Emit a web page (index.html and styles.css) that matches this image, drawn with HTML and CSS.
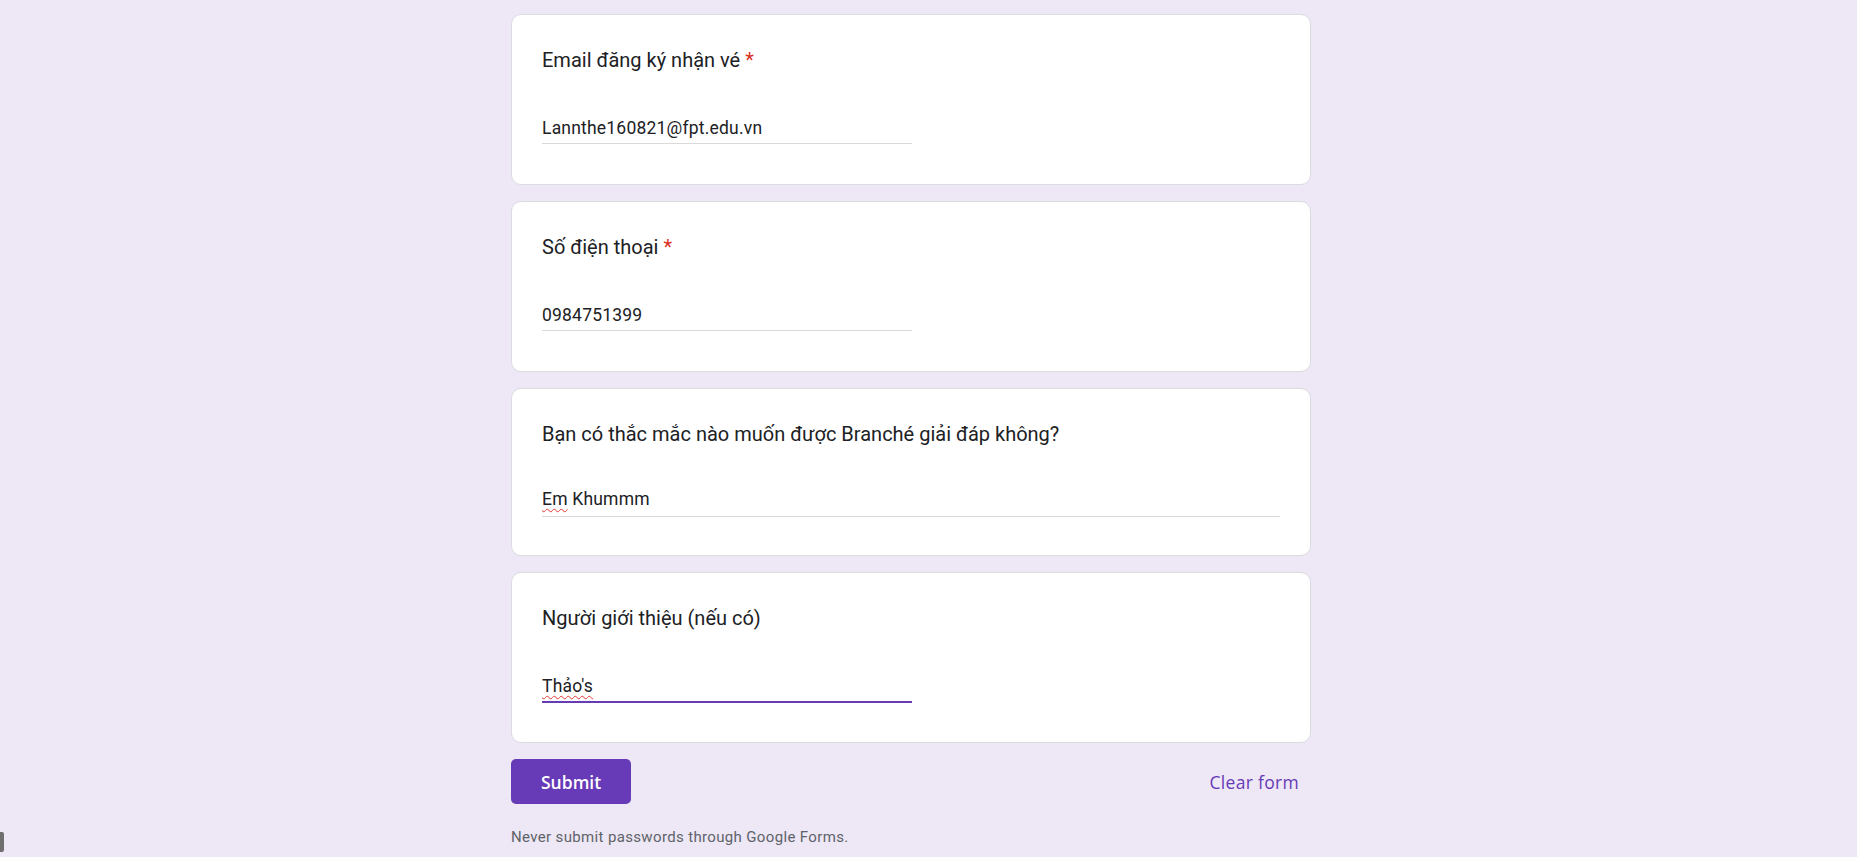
FILE: index.html
```html
<!DOCTYPE html>
<html lang="vi">
<head>
<meta charset="utf-8">
<title>Form</title>
<link rel="stylesheet" href="styles.css">
</head>
<body>
<main class="form">
  <section class="card">
    <div class="q-title">Email đăng ký nhận vé<span class="req">*</span></div>
    <div class="answer short"><span class="answer-text">Lannthe160821@fpt.edu.vn</span></div>
  </section>
  <section class="card">
    <div class="q-title">Số điện thoại<span class="req">*</span></div>
    <div class="answer short"><span class="answer-text">0984751399</span></div>
  </section>
  <section class="card">
    <div class="q-title">Bạn có thắc mắc nào muốn được Branché giải đáp không?</div>
    <div class="answer long"><span class="answer-text"><span class="misspelled">Em</span> Khummm</span></div>
  </section>
  <section class="card">
    <div class="q-title">Người giới thiệu (nếu có)</div>
    <div class="answer short focused"><span class="answer-text"><span class="misspelled">Thảo's</span></span></div>
  </section>
  <div class="actions">
    <button class="btn-submit" type="button">Submit</button>
    <button class="btn-clear" type="button">Clear form</button>
  </div>
  <p class="notice">Never submit passwords through Google Forms.</p>
</main>
<div class="edge-tab"></div>
</body>
</html>
```
FILE: styles.css
```css
html, body {
  margin: 0;
  padding: 0;
  height: 100%;
  overflow: hidden;
}
body {
  background: #ede7f6;
  font-family: Roboto, "Noto Sans", Arial, sans-serif;
  color: #202124;
}
.form {
  width: 800px;
  margin-left: 511px;
  padding-top: 14px;
  display: flex;
  flex-direction: column;
  gap: 16px;
}
.card {
  background: #fff;
  border: 1px solid #dadce0;
  border-radius: 10px;
  padding: 30px;
  display: flex;
  flex-direction: column;
}
.q-title {
  font-size: 20px;
  line-height: 30px;
  font-weight: 400;
  color: #202124;
}
.req {
  color: #d93025;
  padding-left: 5px;
}
.answer {
  margin-top: 42px;
  margin-bottom: 10px;
  padding-bottom: 4px;
  border-bottom: 1px solid #dadada;
  font-size: 17.5px;
  line-height: 22px;
  letter-spacing: 0.2px;
  color: #202124;
  position: relative;
}
.answer.short {
  width: 370px;
}
.answer.long {
  margin-top: 39px;
  padding-bottom: 6px;
  margin-bottom: 8px;
}
.answer.focused::after {
  content: "";
  position: absolute;
  left: 0;
  right: 0;
  bottom: -2px;
  height: 2px;
  background: #673ab7;
}
.misspelled {
  text-decoration: underline wavy #e53935;
  text-decoration-thickness: 1px;
  text-underline-offset: 3px;
  text-decoration-skip-ink: none;
}
.actions {
  display: flex;
  justify-content: space-between;
  align-items: center;
}
.btn-submit {
  height: 45px;
  padding: 0 30px;
  border: none;
  border-radius: 5px;
  background: #673ab7;
  color: #fff;
  font-family: "Open Sans", Roboto, sans-serif;
  font-size: 17.5px;
  font-weight: 600;
  cursor: pointer;
}
.btn-clear {
  height: 45px;
  padding: 0 12px 0 10px;
  border: none;
  background: transparent;
  color: #673ab7;
  font-family: "Open Sans", Roboto, sans-serif;
  font-size: 17.5px;
  font-weight: 500;
  letter-spacing: 0.3px;
  cursor: pointer;
}
.notice {
  margin: 7px 0 0;
  font-size: 15px;
  line-height: 20px;
  color: #5f6368;
  letter-spacing: 0.35px;
}
.edge-tab {
  position: fixed;
  left: 0;
  bottom: 5px;
  width: 4px;
  height: 20px;
  background: #6f6f6f;
  border-radius: 0 2px 2px 0;
}
```
